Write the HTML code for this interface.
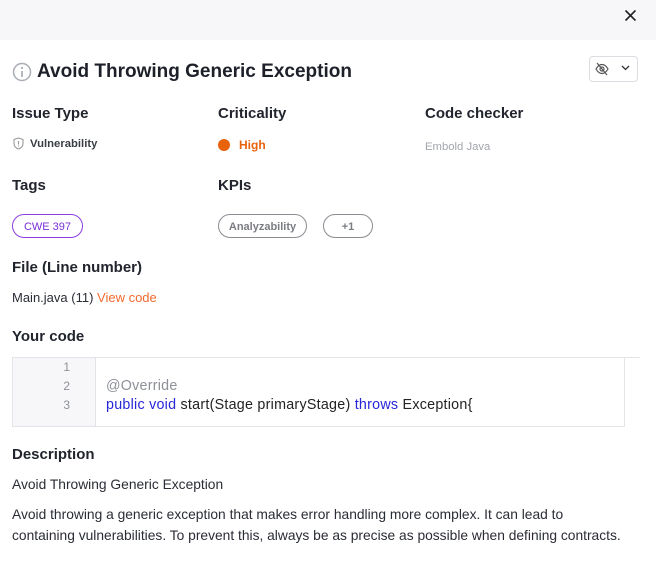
<!DOCTYPE html>
<html><head><meta charset="utf-8"><style>
body{margin:0;width:656px;height:563px;overflow:hidden;background:#fff;font-family:"Liberation Sans",sans-serif;color:#1f2330;position:relative}
.top{position:absolute;left:0;top:0;width:656px;height:40px;background:#f7f7f9}
.a{position:absolute;white-space:nowrap}
h3{margin:0;font-size:15px;font-weight:bold;color:#22252e}
.pill{position:absolute;height:24px;border-radius:13px;box-sizing:border-box;font-size:11px;font-weight:bold;display:flex;align-items:center;justify-content:center;padding-top:1px}
.p{font-size:13.8px;color:#2a2d35}
</style></head><body>
<div class="top"></div>
<svg class="a" style="left:624px;top:9px" width="13" height="13" viewBox="0 0 13 13"><path d="M1.5 1.5L11.5 11.5M11.5 1.5L1.5 11.5" stroke="#222" stroke-width="1.6"/></svg>
<svg class="a" style="left:12px;top:62px" width="20" height="20" viewBox="0 0 20 20"><circle cx="10" cy="10" r="8.5" fill="none" stroke="#a9adb5" stroke-width="1.5"/><circle cx="10" cy="6" r="1.1" fill="#a9adb5"/><path d="M10 9v6" stroke="#a9adb5" stroke-width="1.7"/></svg>
<div class="a" style="left:37px;top:61px;font-size:19px;font-weight:bold;color:#1d2029">Avoid Throwing Generic Exception</div>
<div class="a" style="left:589px;top:56px;width:49px;height:26px;border:1px solid #dcdde2;border-radius:4px;box-sizing:border-box"></div>
<svg class="a" style="left:594px;top:61px" width="16" height="16" viewBox="0 0 16 16"><path d="M2 8c2-3.5 4-4.5 6-4.5s4 1 6 4.5c-2 3.5-4 4.5-6 4.5S4 11.5 2 8z" fill="none" stroke="#555" stroke-width="1.2"/><circle cx="8" cy="8" r="2" fill="none" stroke="#555" stroke-width="1.2"/><path d="M3 2l10 12" stroke="#555" stroke-width="1.2"/></svg>
<svg class="a" style="left:621px;top:65px" width="9" height="6" viewBox="0 0 9 6"><path d="M1 1l3.5 3.5L8 1" fill="none" stroke="#333" stroke-width="1.3"/></svg>
<h3 class="a" style="left:12px;top:105px">Issue Type</h3>
<h3 class="a" style="left:218px;top:105px">Criticality</h3>
<h3 class="a" style="left:425px;top:105px">Code checker</h3>
<svg class="a" style="left:13px;top:137px" width="11" height="13" viewBox="0 0 11 13"><path d="M5.5 1L10 2.5v4c0 3-2 4.6-4.5 5.5C3 11.1 1 9.5 1 6.5v-4z" fill="none" stroke="#999" stroke-width="1.1"/><path d="M5.5 4v3.5" stroke="#999" stroke-width="1.1"/><circle cx="5.5" cy="9" r=".6" fill="#999"/></svg>
<div class="a" style="left:30px;top:138px;font-size:11.3px;font-weight:bold;color:#3a3d45">Vulnerability</div>
<div class="a" style="left:218px;top:139px;width:12px;height:12px;border-radius:50%;background:#e8620c"></div>
<div class="a" style="left:239px;top:138px;font-size:12px;font-weight:bold;color:#e8620c">High</div>
<div class="a" style="left:425px;top:141px;font-size:11.3px;color:#a3a6ad">Embold Java</div>
<h3 class="a" style="left:12px;top:177px">Tags</h3>
<h3 class="a" style="left:218px;top:177px">KPIs</h3>
<div class="pill" style="left:12px;top:214px;width:71px;border:1px solid #8b3fe0;color:#7a30d8;font-weight:normal">CWE 397</div>
<div class="pill" style="left:218px;top:214px;width:89px;border:1px solid #8a8c92;color:#7a7c82">Analyzability</div>
<div class="pill" style="left:323px;top:214px;width:50px;border:1px solid #8a8c92;color:#7a7c82">+1</div>
<h3 class="a" style="left:12px;top:259px">File (Line number)</h3>
<div class="a" style="left:12px;top:290px;font-size:13px;color:#2a2d35">Main.java (11) <span style="color:#ef6a2e">View code</span></div>
<h3 class="a" style="left:12px;top:328px">Your code</h3>
<div class="a" style="left:12px;top:357px;width:628px;height:1px;background:#e3e4e8"></div>
<div class="a" style="left:12px;top:357px;width:613px;height:70px;border:1px solid #e3e4e8;border-top:none;box-sizing:border-box"></div>
<div class="a" style="left:13px;top:358px;width:82px;height:68px;background:#f7f7f9;border-right:1px solid #e3e4e8"></div>
<div class="a" style="left:60px;top:358px;font-size:12px;color:#8d9097;line-height:19px;text-align:right;width:10px">1<br>2<br>3</div>
<div class="a" style="left:106px;top:377px;font-size:14.3px;line-height:19px;color:#222;letter-spacing:0.25px">
<span style="color:#8d9097">@Override</span><br><span style="color:#2727d8">public void</span> start(Stage primaryStage) <span style="color:#2727d8">throws</span> Exception{</div>
<h3 class="a" style="left:12px;top:446px">Description</h3>
<div class="a p" style="left:12px;top:477px">Avoid Throwing Generic Exception</div>
<div class="a p" style="left:12px;top:504px;line-height:21px">Avoid throwing a generic exception that makes error handling more complex. It can lead to<br>containing vulnerabilities. To prevent this, always be as precise as possible when defining contracts.</div>
</body></html>
